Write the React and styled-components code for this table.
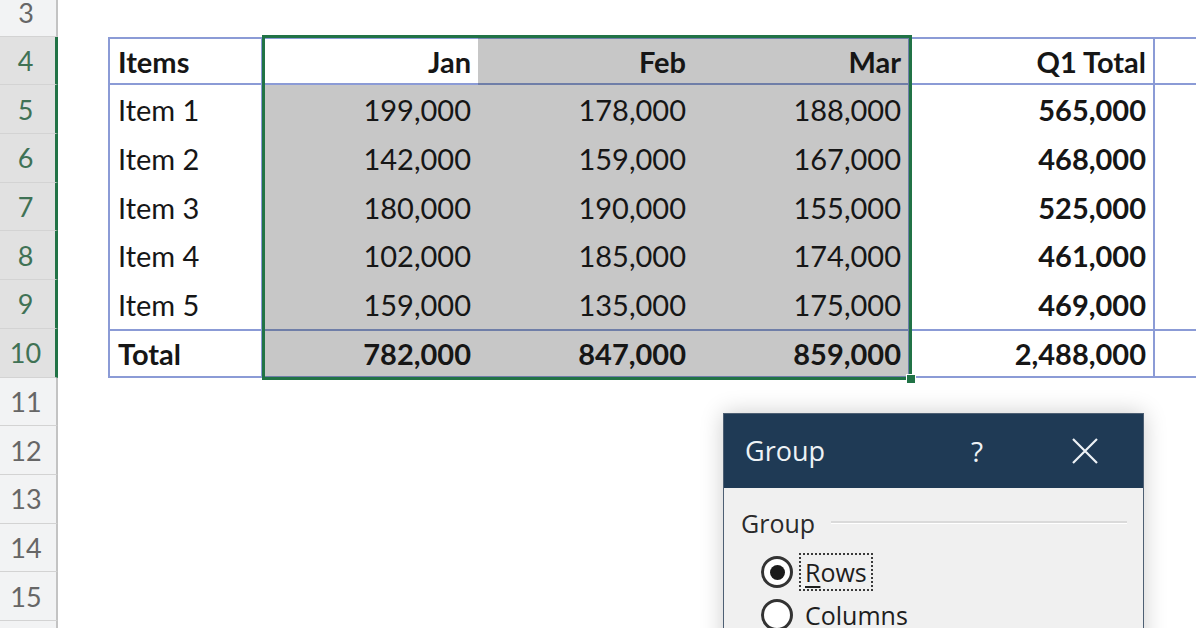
import React from "react";
import styled, { createGlobalStyle, css } from "styled-components";

const GlobalStyle = createGlobalStyle`
  html, body {
    margin: 0;
    padding: 0;
    background: #ffffff;
  }
  * {
    box-sizing: border-box;
  }
`;

const COLS = "58px 50px 155px 215px 215px 217px 245px 1fr";
const LINE = "#8b9bd6";
const LINE_SEL = "#6f7ea8";

const Page = styled.div`
  position: relative;
  width: 1196px;
  height: 628px;
  overflow: hidden;
  font-family: Lato, "Liberation Sans", sans-serif;
  color: #161616;
`;

const Sheet = styled.div`
  margin-top: -10px;
  display: flex;
  flex-direction: column;
`;

const Block = styled.div`
  position: relative;
`;

const Row = styled.div`
  display: grid;
  grid-template-columns: ${COLS};
  height: ${(p) => p.$h || 48.7}px;
`;

const RowHead = styled.div`
  display: flex;
  align-items: center;
  justify-content: center;
  padding-right: 4px;
  font-size: 27px;
  background: ${(p) => (p.$sel ? "#e1e1e1" : "#f2f3f4")};
  color: ${(p) => (p.$sel ? "#3f7255" : "#666666")};
  border-bottom: 1px solid #d3d3d3;
  border-right: ${(p) => (p.$sel ? "3px solid #217346" : "2px solid #c3c3c3")};
`;

const edge = (on, color) => (on ? `2px solid ${color}` : "none");

const Cell = styled.div`
  display: flex;
  align-items: center;
  justify-content: ${(p) => (p.$right ? "flex-end" : "flex-start")};
  padding: 0 7px 0 8px;
  font-size: 29px;
  font-weight: ${(p) => (p.$bold ? 700 : 400)};
  background: ${(p) => (p.$sel ? "#c7c7c7" : "#ffffff")};
  white-space: nowrap;
  ${(p) => {
    const c = p.$sel ? LINE_SEL : LINE;
    return css`
      border-top: ${edge(p.$bt, c)};
      border-bottom: ${edge(p.$bb, c)};
      border-left: ${edge(p.$bl, c)};
      border-right: ${edge(p.$br, c)};
    `;
  }}
`;

const Selection = styled.div`
  position: absolute;
  left: 262px;
  top: -2px;
  width: 650px;
  height: 345px;
  border: 3px solid #217346;
  pointer-events: none;
`;

const Handle = styled.div`
  position: absolute;
  right: -7px;
  bottom: -7px;
  width: 10px;
  height: 10px;
  background: #217346;
  border: 1px solid #ffffff;
`;

const Dialog = styled.div`
  position: absolute;
  left: 723px;
  top: 413px;
  width: 421px;
  height: 260px;
  background: #f0f0f0;
  border: 1px solid #4d5f73;
  box-shadow: 0 0 22px rgba(0, 0, 0, 0.2);
  font-family: "Open Sans", "Liberation Sans", sans-serif;
`;

const TitleBar = styled.div`
  display: flex;
  align-items: center;
  height: 74px;
  padding: 0 26px 0 21px;
  background: #1f3a55;
  color: #eef2f6;
  font-size: 27px;
`;

const Title = styled.span`
  flex: 1;
  margin-top: -2px;
`;

const TitleButton = styled.span`
  display: flex;
  align-items: center;
  justify-content: center;
  width: 64px;
  height: 74px;
  margin-left: ${(p) => p.$gap || 0}px;
  font-size: 28px;
`;

const Body = styled.div`
  padding: 20px 16px 0 17px;
`;

const Legend = styled.div`
  display: flex;
  align-items: center;
  gap: 16px;
  font-size: 25px;
  color: #2a2a2a;
  height: 30px;

  &::after {
    content: "";
    flex: 1;
    height: 2px;
    margin-top: -2px;
    background: #dadada;
    border-bottom: 1px solid #ffffff;
  }
`;

const Options = styled.div`
  display: flex;
  flex-direction: column;
  gap: 5px;
  padding: 15px 0 0 20px;
`;

const Option = styled.label`
  display: flex;
  align-items: center;
  gap: 6px;
  font-size: 25px;
  color: #1e1e1e;
  height: 38px;
`;

const Radio = styled.span`
  display: flex;
  align-items: center;
  justify-content: center;
  width: 32px;
  height: 32px;
  border-radius: 50%;
  border: 3px solid #333333;
  background: #ffffff;

  &::after {
    content: "";
    width: 15px;
    height: 15px;
    border-radius: 50%;
    background: ${(p) => (p.$on ? "#1b1b1b" : "transparent")};
  }
`;

const OptionText = styled.span`
  padding: 0 4px;
  line-height: 34px;
  border: 2px dotted ${(p) => (p.$focus ? "#3a3a3a" : "transparent")};
`;

const Key = styled.span`
  text-decoration: underline;
  text-underline-offset: 4px;
`;

const rows = [
  ["Item 1", "199,000", "178,000", "188,000", "565,000"],
  ["Item 2", "142,000", "159,000", "167,000", "468,000"],
  ["Item 3", "180,000", "190,000", "155,000", "525,000"],
  ["Item 4", "102,000", "185,000", "174,000", "461,000"],
  ["Item 5", "159,000", "135,000", "175,000", "469,000"],
];

function EmptyRow({ n, h }) {
  return (
    <Row $h={h}>
      <RowHead>{n}</RowHead>
    </Row>
  );
}

function CloseIcon() {
  return (
    <svg width="26" height="26" viewBox="0 0 26 26">
      <path d="M1 1 L25 25 M25 1 L1 25" stroke="#eef2f6" strokeWidth="2.2" fill="none" />
    </svg>
  );
}

export default function App() {
  return (
    <Page>
      <GlobalStyle />
      <Sheet>
        <EmptyRow n={3} h={46.7} />
        <Block>
          <Row>
            <RowHead $sel>4</RowHead>
            <div />
            <Cell $bold $bt $bb $bl $br>Items</Cell>
            <Cell $bold $right $bt $bb>Jan</Cell>
            <Cell $bold $right $sel $bt $bb>Feb</Cell>
            <Cell $bold $right $sel $bt $bb $br>Mar</Cell>
            <Cell $bold $right $bt $bb $br>Q1 Total</Cell>
            <Cell $bt $bb />
          </Row>
          {rows.map((r, i) => (
            <Row key={r[0]}>
              <RowHead $sel>{i + 5}</RowHead>
              <div />
              <Cell $bl $br>{r[0]}</Cell>
              <Cell $right $sel>{r[1]}</Cell>
              <Cell $right $sel>{r[2]}</Cell>
              <Cell $right $sel $br>{r[3]}</Cell>
              <Cell $bold $right $br>{r[4]}</Cell>
              <Cell />
            </Row>
          ))}
          <Row>
            <RowHead $sel>10</RowHead>
            <div />
            <Cell $bold $bt $bb $bl $br>Total</Cell>
            <Cell $bold $right $sel $bt $bb>782,000</Cell>
            <Cell $bold $right $sel $bt $bb>847,000</Cell>
            <Cell $bold $right $sel $bt $bb $br>859,000</Cell>
            <Cell $bold $right $bt $bb $br>2,488,000</Cell>
            <Cell $bt $bb />
          </Row>
          <Selection>
            <Handle />
          </Selection>
        </Block>
        {[11, 12, 13, 14, 15, 16].map((n) => (
          <EmptyRow key={n} n={n} />
        ))}
      </Sheet>

      <Dialog>
        <TitleBar>
          <Title>Group</Title>
          <TitleButton>?</TitleButton>
          <TitleButton $gap={44}>
            <CloseIcon />
          </TitleButton>
        </TitleBar>
        <Body>
          <Legend>Group</Legend>
          <Options>
            <Option>
              <Radio $on />
              <OptionText $focus>
                <Key>R</Key>ows
              </OptionText>
            </Option>
            <Option>
              <Radio />
              <OptionText>Columns</OptionText>
            </Option>
          </Options>
        </Body>
      </Dialog>
    </Page>
  );
}
